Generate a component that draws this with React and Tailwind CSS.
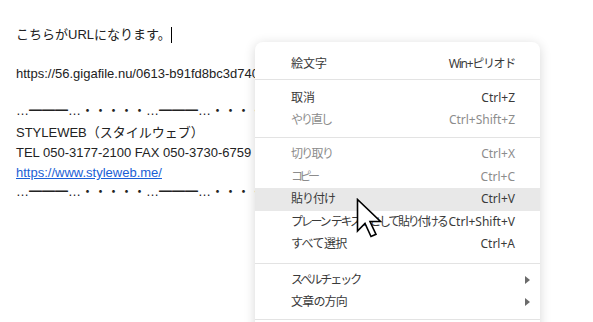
import React from "react";

const Sep = ({ top, bottom }) => (
  <div style={{ marginTop: top, marginBottom: bottom }} className="h-px bg-[#e3e3e3]" />
);

const Row = ({ label, shortcut, disabled, active, arrow, h = "h-[22px]", tr = "", str = "" }) => (
  <div
    className={`${h} flex items-center pl-[36px] pr-[25px] ${active ? "bg-[#e8e8e8]" : ""}`}
  >
    <span
      className={`flex-1 whitespace-pre ${tr} ${disabled ? "text-[#8c8c8c]" : "text-[#3a3a3a]"}`}
    >
      {label}
    </span>
    {shortcut && (
      <span className={`whitespace-nowrap ${str} ${disabled ? "text-[#8c8c8c]" : "text-[#3a3a3a]"}`}>
        {shortcut}
      </span>
    )}
    {arrow && (
      <svg width="5" height="8" viewBox="0 0 5 8" className="-mr-[15px]">
        <path d="M0 0 L5 4 L0 8 Z" fill="#6b6b6b" />
      </svg>
    )}
  </div>
);

export default function App() {
  const dash = "…━━━…・・・・・…━━━…・・・・・…";
  return (
    <div className="relative w-[593px] h-[322px] bg-white overflow-hidden">
      <div
        className="pt-[25px] pl-[16px] text-[13px] leading-[20px] text-[#222222] whitespace-nowrap"
        style={{ fontFamily: '"Liberation Sans","Noto Sans CJK JP",sans-serif' }}
      >
        <div className="flex items-center">
          <span>こちらがURLになります。</span>
          <span className="inline-block w-px h-[16px] bg-black" />
        </div>
        <div className="h-[19px]" />
        <div className="w-[240px] overflow-hidden">https://56.gigafile.nu/0613-b91fd8bc3d7405e6f1a2b3c4d5e</div>
        <div className="h-[17px]" />
        <div className="w-[240px] overflow-hidden">{dash}</div>
        <div className="mt-[2px]">STYLEWEB（スタイルウェブ）</div>
        <div>TEL 050-3177-2100 FAX 050-3730-6759</div>
        <div>
          <span className="text-[#1a5fd6] underline">https://www.styleweb.me/</span>
        </div>
        <div className="-mt-[1px] w-[240px] overflow-hidden">{dash}</div>
      </div>

      <div
        className="absolute left-[255px] top-[42px] w-[285px] h-[300px] bg-white rounded-[8px] shadow-[0_2px_12px_rgba(0,0,0,0.16)] text-[12px] pt-[11px]"
        style={{ fontFamily: '"Noto Sans","Noto Sans CJK JP",sans-serif' }}
      >
        <Row label="絵文字" shortcut="Win+ピリオド" str="tracking-[-1.3px]" />
        <Sep top={4} bottom={7} />
        <Row label="取消" shortcut="Ctrl+Z" />
        <Row label="やり直し" shortcut="Ctrl+Shift+Z" disabled tr="tracking-[-2px]" />
        <Sep top={6} bottom={5} />
        <Row label="切り取り" shortcut="Ctrl+X" disabled h="h-[22.5px]" tr="tracking-[-1.7px]" />
        <Row label="コピー" shortcut="Ctrl+C" disabled h="h-[22.5px]" tr="tracking-[-3.5px]" />
        <Row label="貼り付け" shortcut="Ctrl+V" active h="h-[22.5px]" tr="tracking-[-1px]" />
        <Row
          label="プレーン  テキストとして貼り付ける"
          shortcut="Ctrl+Shift+V"
          h="h-[22.5px]"
          tr="tracking-[-2.3px]"
        />
        <Row label="すべて選択" shortcut="Ctrl+A" h="h-[22.5px]" tr="tracking-[-0.6px]" />
        <Sep top={7.5} bottom={5} />
        <Row label="スペルチェック" arrow tr="tracking-[-2px]" />
        <Row label="文章の方向" arrow tr="tracking-[-0.8px]" />
        <Sep top={6} bottom={5} />
      </div>

      <svg
        className="absolute left-[356px] top-[198px]"
        width="28"
        height="42"
        viewBox="0 0 28 42"
      >
        <path
          d="M1.5 1.5 L1.5 33 L9 25.5 L15 38.5 L20 36.3 L14 23.5 L24.5 23.5 Z"
          fill="white"
          stroke="black"
          strokeWidth="1.6"
          strokeLinejoin="miter"
        />
      </svg>
    </div>
  );
}
